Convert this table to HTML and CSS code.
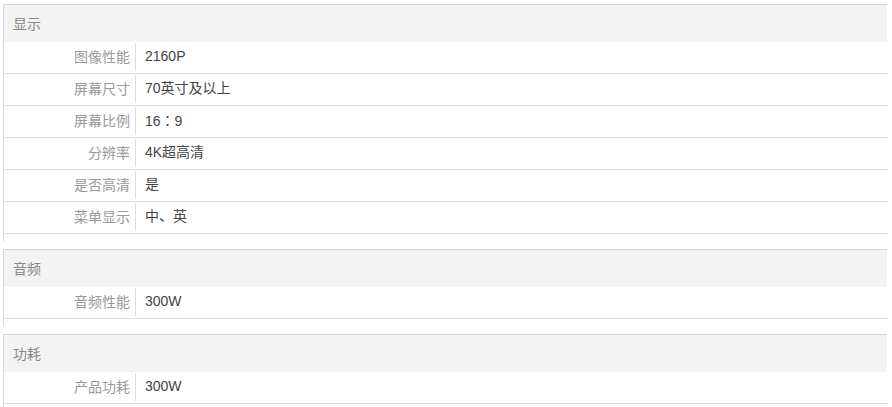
FILE: index.html
```html
<!DOCTYPE html>
<html lang="zh">
<head>
<meta charset="utf-8">
<link rel="stylesheet" href="styles.css">
</head>
<body>
<div class="section">
  <div class="head">显示</div>
  <div class="row"><div class="label">图像性能</div><div class="value">2160P</div></div>
  <div class="row"><div class="label">屏幕尺寸</div><div class="value">70英寸及以上</div></div>
  <div class="row"><div class="label">屏幕比例</div><div class="value">16<span class="colon">：</span>9</div></div>
  <div class="row"><div class="label">分辨率</div><div class="value">4K超高清</div></div>
  <div class="row"><div class="label">是否高清</div><div class="value">是</div></div>
  <div class="row"><div class="label">菜单显示</div><div class="value">中、英</div></div>
</div>
<div class="section">
  <div class="head">音频</div>
  <div class="row"><div class="label">音频性能</div><div class="value">300W</div></div>
</div>
<div class="section">
  <div class="head">功耗</div>
  <div class="row"><div class="label">产品功耗</div><div class="value">300W</div></div>
</div>
</body>
</html>
```
FILE: styles.css
```css
html, body {
  margin: 0;
  padding: 0;
  background: #fff;
}
body {
  padding-top: 4px;
  font-family: "Liberation Sans", "Noto Sans CJK SC", sans-serif;
  font-size: 14px;
}
.section {
  width: 883px;
  margin: 0 0 8px 3px;
  border-top: 1px solid #d6d6d6;
  border-left: 1px solid #d9d9d9;
  padding-bottom: 7px;
}
.head {
  height: 37px;
  line-height: 38px;
  background: #f3f3f3;
  padding-left: 9px;
  color: #888;
}
.row {
  display: flex;
  height: 31px;
  border-bottom: 1px solid #dcdcdc;
}
.label {
  width: 126px;
  height: 28px;
  line-height: 28px;
  margin-top: 1px;
  padding-right: 5px;
  text-align: right;
  color: #999;
  border-right: 1px solid #dcdcdc;
}
.value {
  padding-left: 9px;
  line-height: 29px;
  color: #444;
}
.colon {
  font-family: "Noto Sans CJK TC", sans-serif;
}
```
